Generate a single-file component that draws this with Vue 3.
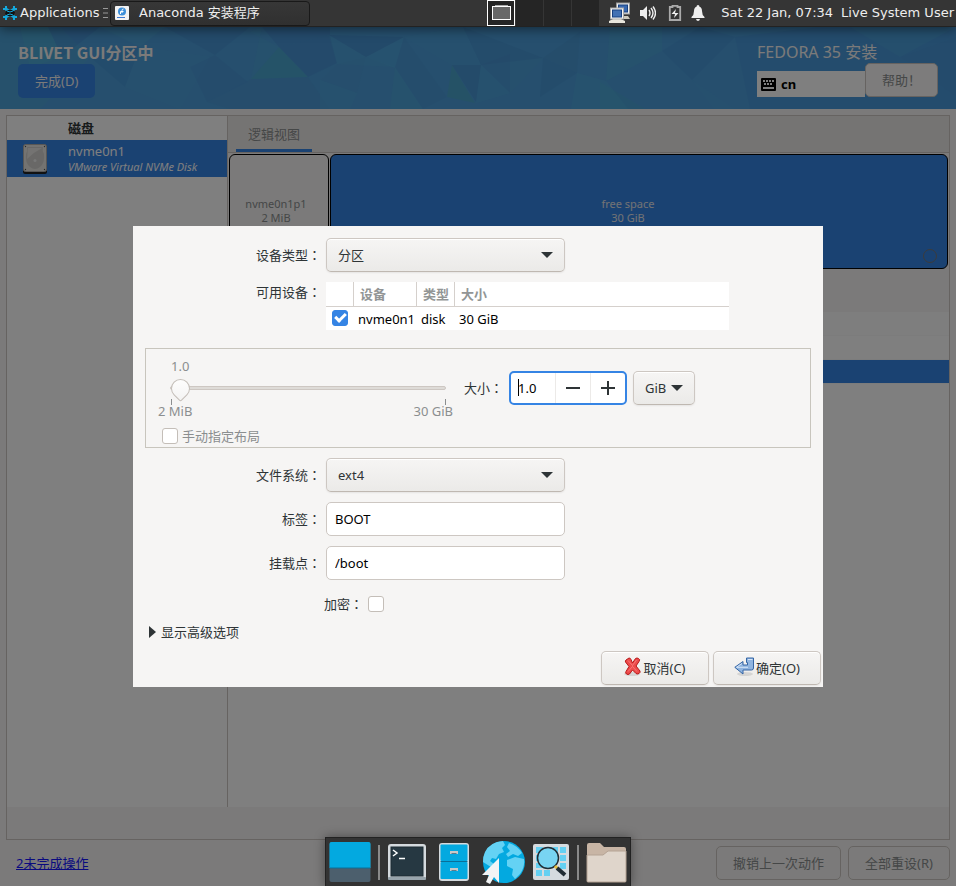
<script setup>
import { ref } from 'vue'

const deviceType = ref('分区')
const filesystem = ref('ext4')
const label = ref('BOOT')
const mountpoint = ref('/boot')
const size = ref('1.0')
const unit = ref('GiB')
const sliderValue = ref(0)
const manualLayout = ref(false)
const encrypt = ref(false)
const deviceUsed = ref(true)

const facets = [
  ['0,0 60,0 90,30 40,82 0,82', '#58d0b8', 0.16],
  ['20,0 48,0 62,30 30,40', '#50d0c8', 0.22],
  ['48,0 100,0 62,30', '#3c78c8', 0.35],
  ['100,0 140,20 165,0', '#58b8e0', 0.3],
  ['90,30 140,20 125,60', '#3c88d0', 0.4],
  ['140,20 210,30 180,82 125,60', '#58b0e0', 0.25],
  ['165,0 250,0 215,28', '#3c78c8', 0.3],
  ['215,28 248,55 207,75 190,40', '#4488d0', 0.35],
  ['250,5 279,20 251,52 262,0', '#50b0d8', 0.3],
  ['279,20 308,50 251,52', '#48c0b0', 0.38],
  ['279,20 330,8 337,36 308,50', '#3c78c8', 0.35],
  ['262,0 330,0 330,8 279,20', '#3c70c0', 0.3],
  ['308,50 251,52 207,75 230,82 330,82', '#4c90d0', 0.3],
  ['329,8 366,30 395,40 337,37', '#50b4e0', 0.32],
  ['366,30 404,10 395,41', '#58bce8', 0.32],
  ['329,8 404,10 366,30', '#3870b8', 0.32],
  ['337,37 366,30 357,66 320,53', '#4c9cd8', 0.35],
  ['320,53 357,66 350,82 320,82', '#50b4e0', 0.35],
  ['395,40 423,82 390,82', '#50b8d8', 0.3],
  ['404,10 463,0 481,38 452,38', '#50b0e0', 0.25],
  ['404,10 447,70 423,82 395,40', '#4890d0', 0.35],
  ['452,38 475,76 447,70', '#48b8a0', 0.38],
  ['452,38 481,38 476,75', '#3c80c0', 0.38],
  ['481,38 510,27 510,66', '#4890d0', 0.3],
  ['481,38 510,66 476,76', '#50b4e0', 0.35],
  ['510,27 543,31 510,66', '#50a8d8', 0.32],
  ['463,0 543,31 481,38', '#3c78c0', 0.25],
  ['543,31 577,46 540,70', '#3c80c8', 0.3],
  ['543,31 580,5 577,46', '#4888c8', 0.32],
  ['577,46 606,54 628,82 571,82', '#50b8e0', 0.38],
  ['610,0 662,0 662,24 606,54', '#50b8d8', 0.3],
  ['662,24 700,0 735,10 692,53', '#3c80d0', 0.3],
  ['600,55 645,82 600,82', '#48c0c0', 0.22],
  ['692,53 735,82 714,82', '#50a8e8', 0.2],
  ['735,10 750,82 956,82 956,0 820,0', '#3c78d0', 0.22],
  ['850,0 900,30 956,0', '#50b8e0', 0.25],
  ['900,30 956,70 956,10', '#4090d8', 0.28]
]
</script>

<template>
  <div class="screen">
    <nav class="panel">
      <button class="panel-btn apps">
        <svg width="16" height="16" viewBox="0 0 16 16"><path d="M3 1h2v2l3 2 3-2V1h2v2h2v2h-2l-2 3 2 3h2v2h-2v2h-2v-2l-3-2-3 2v2H3v-2H1v-2h2l2-3-2-3H1V3h2z" fill="#14a8dc" /><path d="M4 6l2-1h4l3 2-1 3-2 1H6l-3-2z" fill="#111" /><path d="M5 6l3 1 3-1M5 10l3-1 3 1" stroke="#14a8dc" fill="none" /></svg>
        <span>Applications</span>
        <svg width="5" height="12" viewBox="0 0 5 12"><path d="M0 1.5h5M0 6h5M0 10.5h5" stroke="#999" /></svg>
      </button>
      <button class="task">
        <svg width="14" height="14" viewBox="0 0 14 14"><rect width="14" height="14" rx="1" fill="#f2f2f2" /><circle cx="7" cy="5.500" r="4" fill="#3c8ed8" /><path d="M5.500 8V5.500h3M7 7V4.500q0-1.500 1.500-1.500" stroke="#fff" fill="none" /><path d="M2 11.500h8" stroke="#3c78d0" /></svg>
        <span>Anaconda 安装程序</span>
      </button>
      <div class="pager">
        <button class="cell active" aria-label="Workspace 1">
          <svg width="19" height="16" viewBox="0 0 19 16"><path d="M3 .5h13" stroke="#aaa" /><rect x=".5" y="1.500" width="18" height="13" fill="#686868" stroke="#fff" /></svg>
        </button>
        <button v-for="n in 3" :key="n" class="cell" :aria-label="'Workspace ' + (n + 1)"></button>
      </div>
      <div class="tray">
        <svg width="22" height="22" viewBox="0 0 22 22"><path d="M12 17h9l-2-3h-5z" fill="#ccc9bd" /><rect x="7.500" y="1" width="13" height="11" fill="#eee" stroke="#999" /><rect x="9.500" y="3" width="9" height="7" fill="#3868b0" stroke="#174080" /><path d="M0 21v-2l4-2h8l4 2v2z" fill="#e8e6dc" /><rect x="1.500" y="6" width="13" height="11" fill="#f5f5f5" stroke="#aaa" /><rect x="3.500" y="8" width="9" height="7" fill="#4472b4" stroke="#174080" /></svg>
        <svg width="16" height="16" viewBox="0 0 16 16"><path d="M0 5h3l4-4v14l-4-4H0z" fill="#eee" /><path d="M9 5q2 3 0 6M11 3q4 5 0 10M13 1.500q5 6.500 0 13" stroke="#eee" stroke-width="1.400" fill="none" /></svg>
        <svg width="14" height="16" viewBox="0 0 14 16"><path d="M4.500 2V.8h5V2h2.700v13H1.800V2z" fill="none" stroke="#aaa" stroke-width="1.800" /><path d="M8 4L3.500 9H7l-1 4 4.500-5H7z" fill="#eee" /></svg>
        <svg width="14" height="16" viewBox="0 0 14 16"><path d="M7 0q1.500 0 1.500 1.700Q11 2.500 11 6q0 4 2.500 6v1H.5v-1Q3 10 3 6q0-3.500 2.500-4.300Q5.500 0 7 0zM5 14h4q-.5 2-2 2t-2-2z" fill="#eee" /></svg>
      </div>
      <span class="clock">Sat 22 Jan, 07:34</span>
      <span class="user">Live System User</span>
    </nav>

    <main class="installer">
      <header class="banner">
        <svg class="facets" viewBox="0 0 956 82" preserveAspectRatio="none" aria-hidden="true">
          <polygon v-for="(f, i) in facets" :key="i" :points="f[0]" :fill="f[1]" :fill-opacity="f[2]" />
        </svg>
        <div class="banner-left">
          <h1>BLIVET GUI分区中</h1>
          <button class="done">完成(D)</button>
        </div>
        <div class="banner-right">
          <h2>FEDORA 35 安装</h2>
          <div class="banner-tools">
            <button class="layout">
              <svg width="15" height="13" viewBox="0 0 15 13"><rect width="15" height="13" rx="1" fill="#000" /><path d="M2 3h11M3 6h9" stroke="#fff" stroke-width="2" stroke-dasharray="2 1" /><path d="M2 10h11" stroke="#fff" stroke-width="2" /></svg>
              cn
            </button>
            <button class="plain help">帮助！</button>
          </div>
        </div>
      </header>

      <div class="content">
        <section class="frame">
          <div class="panes">
            <aside class="disks">
              <h3>磁盘</h3>
              <a class="disk" href="#disk">
                <svg width="24" height="30" viewBox="0 0 24 30"><rect x="0" y="1" width="24" height="29" rx="2" fill="#222" /><rect x=".5" y=".5" width="23" height="27" rx="2" fill="#e8e7e3" stroke="#b0afac" /><path d="M4 3h16q-1 4 1 7 1 9-4 13-5 4-10 0-5-4-4-13 2-3 1-7z" fill="#d2d1ce" /><path d="M5 4h14q-8 4-15 11z" fill="#e8e7e4" /><circle cx="12" cy="16.500" r="1.500" fill="#eee" /><g fill="#555"><circle cx="2.500" cy="2.500" r=".7" /><circle cx="21.500" cy="2.500" r=".7" /><circle cx="2.500" cy="25.500" r=".7" /><circle cx="21.500" cy="25.500" r=".7" /></g></svg>
                <span class="disk-text"><span>nvme0n1</span><em>VMware Virtual NVMe Disk</em></span>
              </a>
            </aside>
            <div class="view">
              <div class="tabs"><button class="tab">逻辑视图</button></div>
              <div class="parts">
                <button class="part used"><span>nvme0n1p1<br />2 MiB</span></button>
                <button class="part free">
                  <span>free space<br />30 GiB</span>
                  <svg class="ring" width="16" height="16" viewBox="0 0 16 16"><circle cx="8" cy="8" r="6.500" fill="none" stroke="#777" /></svg>
                </button>
              </div>
              <div class="toolbar"></div>
              <div class="rows"><div class="row head"></div><div class="row"></div><div class="row selected"></div></div>
            </div>
          </div>
          <div class="frame-foot"></div>
        </section>
        <footer class="footer">
          <a href="#pending">2未完成操作</a>
          <div class="footer-btns">
            <button class="plain">撤销上一次动作</button>
            <button class="plain">全部重设(R)</button>
          </div>
        </footer>
      </div>

      <div class="backdrop">
        <form class="dialog" @submit.prevent>
          <div class="field">
            <label for="dtype">设备类型<i>：</i></label>
            <span class="select">
              <select id="dtype" v-model="deviceType"><option>分区</option></select>
              <svg width="12" height="6" viewBox="0 0 12 6"><path d="M0 0h12L6 6z" fill="#2e3436" /></svg>
            </span>
          </div>
          <div class="field devices">
            <span class="flabel">可用设备<i>：</i></span>
            <table>
              <thead><tr><th class="c1"></th><th class="c2">设备</th><th class="c3">类型</th><th>大小</th></tr></thead>
              <tbody><tr><td class="c1"><input v-model="deviceUsed" type="checkbox" aria-label="nvme0n1" /></td><td>nvme0n1</td><td>disk</td><td>30 GiB</td></tr></tbody>
            </table>
          </div>

          <div class="sizebox">
            <div class="scale">
              <output for="range">1.0</output>
              <input id="range" v-model="sliderValue" type="range" min="0" max="100" aria-label="大小" />
              <div class="ticks"><span></span><span></span></div>
              <div class="limits"><span>2 MiB</span><span>30 GiB</span></div>
              <label class="manual"><input v-model="manualLayout" type="checkbox" />手动指定布局</label>
            </div>
            <div class="amount">
              <label for="size">大小<i>：</i></label>
              <div class="spin">
                <span class="caret"></span>
                <input id="size" v-model="size" type="text" />
                <button type="button" aria-label="-"><svg width="14" height="14" viewBox="0 0 14 14"><path d="M0 7h14" stroke="#2e3436" stroke-width="2" /></svg></button>
                <button type="button" aria-label="+"><svg width="14" height="14" viewBox="0 0 14 14"><path d="M0 7h14M7 0v14" stroke="#2e3436" stroke-width="2" /></svg></button>
              </div>
              <span class="select unit">
                <select v-model="unit" aria-label="GiB"><option>GiB</option></select>
                <svg width="12" height="6" viewBox="0 0 12 6"><path d="M0 0h12L6 6z" fill="#2e3436" /></svg>
              </span>
            </div>
          </div>

          <div class="field">
            <label for="fs">文件系统<i>：</i></label>
            <span class="select">
              <select id="fs" v-model="filesystem"><option>ext4</option></select>
              <svg width="12" height="6" viewBox="0 0 12 6"><path d="M0 0h12L6 6z" fill="#2e3436" /></svg>
            </span>
          </div>
          <div class="field"><label for="lab">标签<i>：</i></label><input id="lab" v-model="label" class="text" type="text" /></div>
          <div class="field"><label for="mp">挂载点<i>：</i></label><input id="mp" v-model="mountpoint" class="text" type="text" /></div>
          <label class="encrypt"><span>加密<i>：</i></span><input v-model="encrypt" type="checkbox" /></label>
          <button type="button" class="expander">
            <svg width="7" height="12" viewBox="0 0 7 12"><path d="M0 0l7 6-7 6z" fill="#2e3436" /></svg>显示高级选项
          </button>
          <div class="actions">
            <button type="button" class="raised">
              <svg width="17" height="20" viewBox="0 0 17 20"><ellipse cx="8" cy="17" rx="8" ry="2" fill="#000" opacity=".1" /><path d="M2 3l3-2q1.500 0 2 1.500L8.500 6l3-4.500Q13 .5 14.500 1.500q2 1 .5 3L12 9l4 5q.5 1.500-1 2.500-2 1-3 0L8.500 13l-3 4q-1.500 1-3 0-1.500-1-.5-2.500L5 9.500 1.500 5Q1 4 2 3z" fill="#ec4a4a" stroke="#b81818" /><path d="M4 3.500l4.500 5 4-5.500M4 14.500l4.500-5 4.500 5" fill="none" stroke="#f88" stroke-opacity=".7" /></svg>
              <span>取消(C)</span>
            </button>
            <button type="submit" class="raised">
              <svg width="20" height="20" viewBox="0 0 20 20"><ellipse cx="11" cy="17" rx="8" ry="2" fill="#000" opacity=".1" /><path d="M12.500 1h7v10q0 2-2 2H9v4L.8 10.300 9 4.500V8h4.500V5.500h-1z" fill="#8fb4e0" stroke="#3465a4" /><path d="M14 2.500h4.500M8 6.500L2.500 10.300H14" stroke="#d5e4f6" fill="none" /></svg>
              <span>确定(O)</span>
            </button>
          </div>
        </form>
      </div>
    </main>

    <nav class="dock">
      <button aria-label="Show Desktop"><svg width="42" height="42" viewBox="0 0 42 42"><rect x=".5" y="1" width="41" height="40" rx="2" fill="#4c5f6d" /><path d="M.5 27V3q0-2 2-2h37q2 0 2 2v24z" fill="#03a9e0" /><path d="M1 27h40" stroke="#0a6f98" /></svg></button>
      <span class="sep"></span>
      <button aria-label="Terminal"><svg width="40" height="38" viewBox="0 0 40 38"><rect x="1" y="1" width="38" height="36" rx="3" fill="#d5dade" /><rect x="1" y="34" width="38" height="3" rx="1" fill="#98a4ac" /><rect x="4" y="4" width="32" height="29" fill="#263842" stroke="#1c2a32" /><path d="M6 7l4 3-4 3M12 15.500h6" stroke="#fff" stroke-width="1.500" fill="none" /></svg></button>
      <button class="files" aria-label="Files"><svg width="32" height="40" viewBox="0 0 32 40"><rect x="1" y="1" width="30" height="38" rx="3" fill="#d5dade" /><rect x="2.500" y="2.500" width="27" height="16.500" rx="1" fill="#03a9e0" /><rect x="2.500" y="20" width="27" height="17" rx="1" fill="#03a9e0" /><path d="M2.500 19.500h27" stroke="#0a6f98" /><path d="M12 9h8v3h-8zM12 26h8v3h-8z" fill="#c8c8c8" /><path d="M13.500 11.500h5M13.500 28.500h5" stroke="#5d7c8a" /></svg></button>
      <button aria-label="Web Browser"><svg width="44" height="44" viewBox="0 0 44 44"><circle cx="23" cy="22" r="21" fill="#03a9e0" /><path d="M4 12Q9 2 22 1l2 4-3 3 2 4-5 2-3 5-4-1-2 3 4 3-3 3-8-5Q2 16 4 12zM28 3q9 3 13 10l-4 3-5-2-5 3-2-3 4-3-3-4zM26 20l8-3 9 2q1 8-4 15l-5 5-3-4 1-6-6-3z" fill="#64d2f4" /><path d="M18 18v25l-5-6-4 7-4-2 3-7H1z" fill="#f2f4f5" /></svg></button>
      <button aria-label="Application Finder"><svg width="38" height="38" viewBox="0 0 38 38"><rect x="1" y="1" width="36" height="36" rx="2" fill="#d5dbdf" /><g fill="#64d0f2"><path d="M4 4h7v6H4zM13 4h7v6h-7zM21 4h5v6h-5zM28 4h6v6h-6zM28 12h6v6h-6zM28 20h6v6h-6zM4 12h6v6H4zM4 20h6v5H4zM4 27h6v6H4zM12 27h6v6h-6z" /></g><circle cx="16" cy="15" r="10.500" fill="#78d4f2" stroke="#202d35" stroke-width="1.500" /><path d="M23 23l3 3" stroke="#e8c040" stroke-width="3" /><path d="M25 25l8 7" stroke="#202d35" stroke-width="4" /></svg></button>
      <span class="sep"></span>
      <button aria-label="Home"><svg width="41" height="42" viewBox="0 0 41 42"><path d="M1 41V4q0-2 2-2h11l4 4h20q2 0 2 2v33z" fill="#c8b5a5" /><path d="M1 14h16l5-4h18v30q0 1-1 1H2q-1 0-1-1z" fill="#dfd5cb" stroke="#b5a394" /></svg></button>
    </nav>
  </div>
</template>

<style>
body {
  margin: 0;
}
</style>

<style scoped>
* {
  box-sizing: border-box;
}
.screen {
  position: relative;
  display: flex;
  flex-direction: column;
  min-height: 100vh;
  overflow: hidden;
  font: 13px/18px "Noto Sans", "Noto Sans CJK SC", sans-serif;
  color: #2e3436;
  background: #f6f5f4;
}
button,
select,
input {
  font: inherit;
  color: inherit;
  margin: 0;
  padding: 0;
  border: 0;
  background: none;
  outline: none;
}
svg {
  display: block;
  flex: none;
}
i {
  font-style: normal;
  font-family: "Noto Sans CJK TC", sans-serif;
}
h1,
h2,
h3 {
  margin: 0;
}

.panel {
  position: relative;
  z-index: 2;
  display: flex;
  align-items: center;
  height: 27px;
  background: #353535;
  border-bottom: 1px solid #222;
  box-shadow: 0 2px 12px rgba(0, 0, 0, 0.5);
  color: #eee;
  font-family: "DejaVu Sans", "Noto Sans CJK SC", sans-serif;
  white-space: nowrap;
}
.panel-btn {
  display: flex;
  align-items: center;
  gap: 2px;
  width: 110px;
  padding-left: 2px;
}
.panel-btn svg:last-child {
  margin-left: 2px;
}
.task {
  display: flex;
  align-items: center;
  gap: 10px;
  width: 200px;
  height: 25px;
  padding-left: 4px;
  border: 1px solid #191919;
  border-radius: 4px;
  background: linear-gradient(#373737, #303030);
}
.pager {
  display: flex;
  height: 26px;
  margin-left: auto;
}
.cell {
  width: 28px;
  background: #252525;
  border-left: 1px solid #353535;
}
.cell.active {
  display: flex;
  align-items: center;
  justify-content: center;
  border: 1px solid #fff;
}
.tray {
  display: flex;
  align-items: center;
  gap: 9px;
  margin-left: 10px;
}
.tray svg:nth-child(2) {
  margin-right: 3px;
}
.clock {
  margin-left: 16px;
}
.user {
  margin-left: 8px;
  padding-right: 2px;
}

.installer {
  position: relative;
  display: flex;
  flex-direction: column;
  flex: 1;
}
.banner {
  position: relative;
  display: flex;
  justify-content: space-between;
  padding: 14px 18px 11px;
  background: #4c9fdc;
  color: #f6f5f4;
}
.facets {
  position: absolute;
  inset: 0;
  width: 100%;
  height: 100%;
  opacity: 0.65;
}
.banner-left,
.banner-right {
  position: relative;
  display: flex;
  flex-direction: column;
}
h1 {
  font-family: "Noto Sans CJK SC", sans-serif;
  font-size: 16px;
  font-weight: 600;
  line-height: 23px;
}
h2 {
  font-size: 16px;
  font-weight: 400;
  line-height: 22px;
}
.done {
  align-self: flex-start;
  height: 34px;
  padding: 0 17px;
  border-radius: 5px;
  background: #3584e4;
}
.banner-tools {
  display: flex;
  align-items: flex-end;
}
.layout {
  display: flex;
  align-items: center;
  gap: 5px;
  width: 108px;
  height: 26px;
  padding-left: 4px;
  background: #fff;
  color: #000;
  font-weight: 700;
}
.plain {
  height: 34px;
  padding: 0 16px;
  border: 1px solid #cdc7c2;
  border-radius: 5px;
  background: #f6f5f4;
  color: #8b8e8f;
}
.help {
  width: 73px;
  background: #faf9f8;
}

.content {
  display: flex;
  flex-direction: column;
  flex: 1;
  padding: 6px;
}
.frame {
  display: flex;
  flex-direction: column;
  flex: 1;
  border: 1px solid #cdc7c2;
}
.panes {
  display: flex;
  flex: 1;
  background: #fff;
}
.frame-foot {
  height: 32px;
  background: #f6f5f4;
}
.disks {
  width: 221px;
  border-right: 1px solid #cdc7c2;
}
h3 {
  padding-left: 61px;
  font-size: 13px;
  line-height: 24px;
}
.disk {
  display: flex;
  align-items: center;
  gap: 21px;
  height: 37px;
  padding-left: 16px;
  background: #3584e4;
  color: #fff;
  text-decoration: none;
  white-space: nowrap;
}
.disk-text {
  display: flex;
  flex-direction: column;
  line-height: 15px;
}
.disk-text em {
  font-size: 11px;
}
.view {
  display: flex;
  flex-direction: column;
  flex: 1;
}
.tabs {
  height: 37px;
  padding-left: 8px;
  background: #ebe9e7;
  border-bottom: 1px solid #cdc7c2;
}
.tab {
  height: 36px;
  padding: 2px 12px 0;
  border-bottom: 3px solid #3584e4;
  color: #8b8e8f;
}
.parts {
  display: flex;
  gap: 1px;
  padding: 1px;
  background: #f6f5f4;
}
.part {
  position: relative;
  height: 115px;
  padding-bottom: 2px;
  border: 1px solid #000;
  border-radius: 6px;
  font-size: 11px;
  line-height: 14px;
}
.used {
  width: 100px;
  padding-right: 6px;
  color: #8b8e8f;
}
.free {
  flex: 1;
  padding-right: 22px;
  background: #3584e4;
  color: #e4e6ea;
}
.ring {
  position: absolute;
  right: 9px;
  bottom: 4px;
}
.toolbar {
  height: 42px;
  background: #f6f5f4;
}
.row {
  height: 24px;
  border-bottom: 1px solid #f8f8f8;
}
.row.head {
  background: #fdfdfd;
}
.row.selected {
  background: #3584e4;
}
.footer {
  display: flex;
  align-items: center;
  justify-content: space-between;
  padding: 6px 0 0 10px;
}
.footer a {
  color: #1414ff;
}
.footer-btns {
  display: flex;
  gap: 7px;
}

.backdrop {
  position: absolute;
  inset: 0;
  display: flex;
  align-items: center;
  justify-content: center;
  background: rgba(0, 0, 0, 0.5);
}
.dialog {
  display: flex;
  flex-direction: column;
  gap: 10px;
  width: 690px;
  max-width: 100%;
  padding: 12px 2px 2px;
  background: #f6f5f4;
}
.field {
  display: grid;
  grid-template-columns: 186px 239px;
  column-gap: 5px;
  align-items: center;
}
.field label,
.flabel {
  text-align: right;
}
.devices {
  grid-template-columns: 186px 403px;
  align-items: start;
}
.flabel {
  padding-top: 1px;
}
.select {
  position: relative;
  display: block;
}
.select select,
.raised {
  height: 34px;
  border: 1px solid #cdc7c2;
  border-bottom-color: #bfb8b1;
  border-radius: 5px;
  background: linear-gradient(#f6f5f4, #ebeae8);
  box-shadow: inset 0 1px #fff, 0 1px 2px rgba(0, 0, 0, 0.07);
}
.select select {
  display: block;
  width: 100%;
  padding: 0 11px;
  appearance: none;
}
.select svg {
  position: absolute;
  right: 12px;
  top: 14px;
  pointer-events: none;
}
.unit {
  width: 62px;
}
table {
  width: 100%;
  table-layout: fixed;
  border-collapse: separate;
  border-spacing: 0;
  background: #fff;
  color: #000;
  white-space: nowrap;
}
th {
  height: 25px;
  padding: 0 5px 0 6px;
  border-bottom: 1px solid #d5d0cc;
  border-right: 1px solid #d5d0cc;
  color: #929595;
  text-align: left;
}
th:last-child {
  border-right: 0;
}
td {
  height: 23px;
  padding: 0 4px;
}
.c1 {
  width: 28px;
}
.c2 {
  width: 63px;
}
.c3 {
  width: 38px;
}
td.c1 {
  padding: 0 6px 2px;
}
input[type="checkbox"] {
  display: block;
  flex: none;
  width: 16px;
  height: 16px;
  appearance: none;
  border: 1px solid #c4beb8;
  border-radius: 3px;
  background: #fff;
}
input[type="checkbox"]:checked {
  display: flex;
  justify-content: center;
  border-color: #3584e4;
  background: #3584e4;
}
input[type="checkbox"]:checked::before {
  content: "";
  display: block;
  box-sizing: border-box;
  width: 11px;
  height: 7px;
  margin-top: 2px;
  border: solid #fff;
  border-width: 0 0 3px 3px;
  transform: rotate(-45deg);
}
.sizebox {
  display: flex;
  gap: 11px;
  height: 100px;
  margin: 8px 10px 0;
  padding-left: 12px;
  border: 1px solid #c8c5bd;
}
.scale {
  display: flex;
  flex-direction: column;
  width: 295px;
  padding-top: 8px;
  color: #8b8e8f;
}
.scale output {
  padding-left: 13px;
}
.scale input[type="range"] {
  display: block;
  width: 276px;
  height: 22px;
  margin: 2px 0 0 12px;
  appearance: none;
}
input[type="range"]::-webkit-slider-runnable-track {
  height: 4px;
  border: 1px solid #cdc7c2;
  border-radius: 2px;
  background: #dedbd7;
}
input[type="range"]::-webkit-slider-thumb {
  appearance: none;
  box-sizing: border-box;
  width: 19px;
  height: 19px;
  margin-top: -8px;
  border: 1px solid #c4beb8;
  border-radius: 50% 50% 2px 50%;
  background: linear-gradient(135deg, #fff, #f4f3f2);
  transform: rotate(45deg);
}
.ticks {
  display: flex;
  justify-content: space-between;
  height: 6px;
  padding: 0 7px 0 13px;
}
.ticks span {
  width: 1px;
  background: #8b8e8f;
}
.limits {
  display: flex;
  justify-content: space-between;
  line-height: 12px;
}
.manual {
  display: flex;
  align-items: center;
  gap: 4px;
  margin-top: 10px;
  padding-left: 4px;
}
.amount {
  display: flex;
  align-items: center;
  align-self: flex-start;
  gap: 6px;
  padding-top: 22px;
}
.spin {
  position: relative;
  display: flex;
  width: 118px;
  height: 34px;
  border: 2px solid #3584e4;
  border-radius: 5px;
  background: #fff;
  color: #000;
}
.spin input {
  flex: 1;
  min-width: 0;
  padding-left: 7px;
}
.spin button {
  display: flex;
  align-items: center;
  justify-content: center;
  width: 35px;
  border-left: 1px solid #eceae8;
}
.caret {
  position: absolute;
  left: 7px;
  top: 6px;
  width: 1px;
  height: 17px;
  background: #000;
}
.text {
  height: 34px;
  padding: 0 8px;
  border: 1px solid #cdc7c2;
  border-radius: 5px;
  background: #fff;
  color: #000;
}
.encrypt {
  display: flex;
  align-items: center;
  gap: 5px;
  margin-top: 5px;
  padding-left: 189px;
}
.expander {
  display: flex;
  align-items: center;
  align-self: flex-start;
  gap: 5px;
  padding-left: 14px;
}
.actions {
  display: flex;
  justify-content: flex-end;
  gap: 4px;
}
.raised {
  display: flex;
  align-items: center;
  justify-content: center;
  gap: 2px;
  width: 108px;
}
.raised svg {
  margin-bottom: 2px;
}

.dock {
  position: absolute;
  z-index: 2;
  bottom: 0;
  left: 50%;
  transform: translateX(-50%);
  display: flex;
  align-items: center;
  gap: 7px;
  height: 49px;
  padding: 0 3px;
  border: 1px solid #222;
  border-bottom: 0;
  background: #333;
  box-shadow: 0 0 10px rgba(0, 0, 0, 0.4);
}
.files {
  margin: 0 4px;
}
.sep {
  width: 2px;
  height: 35px;
  background: #8a8a8a;
}
</style>
